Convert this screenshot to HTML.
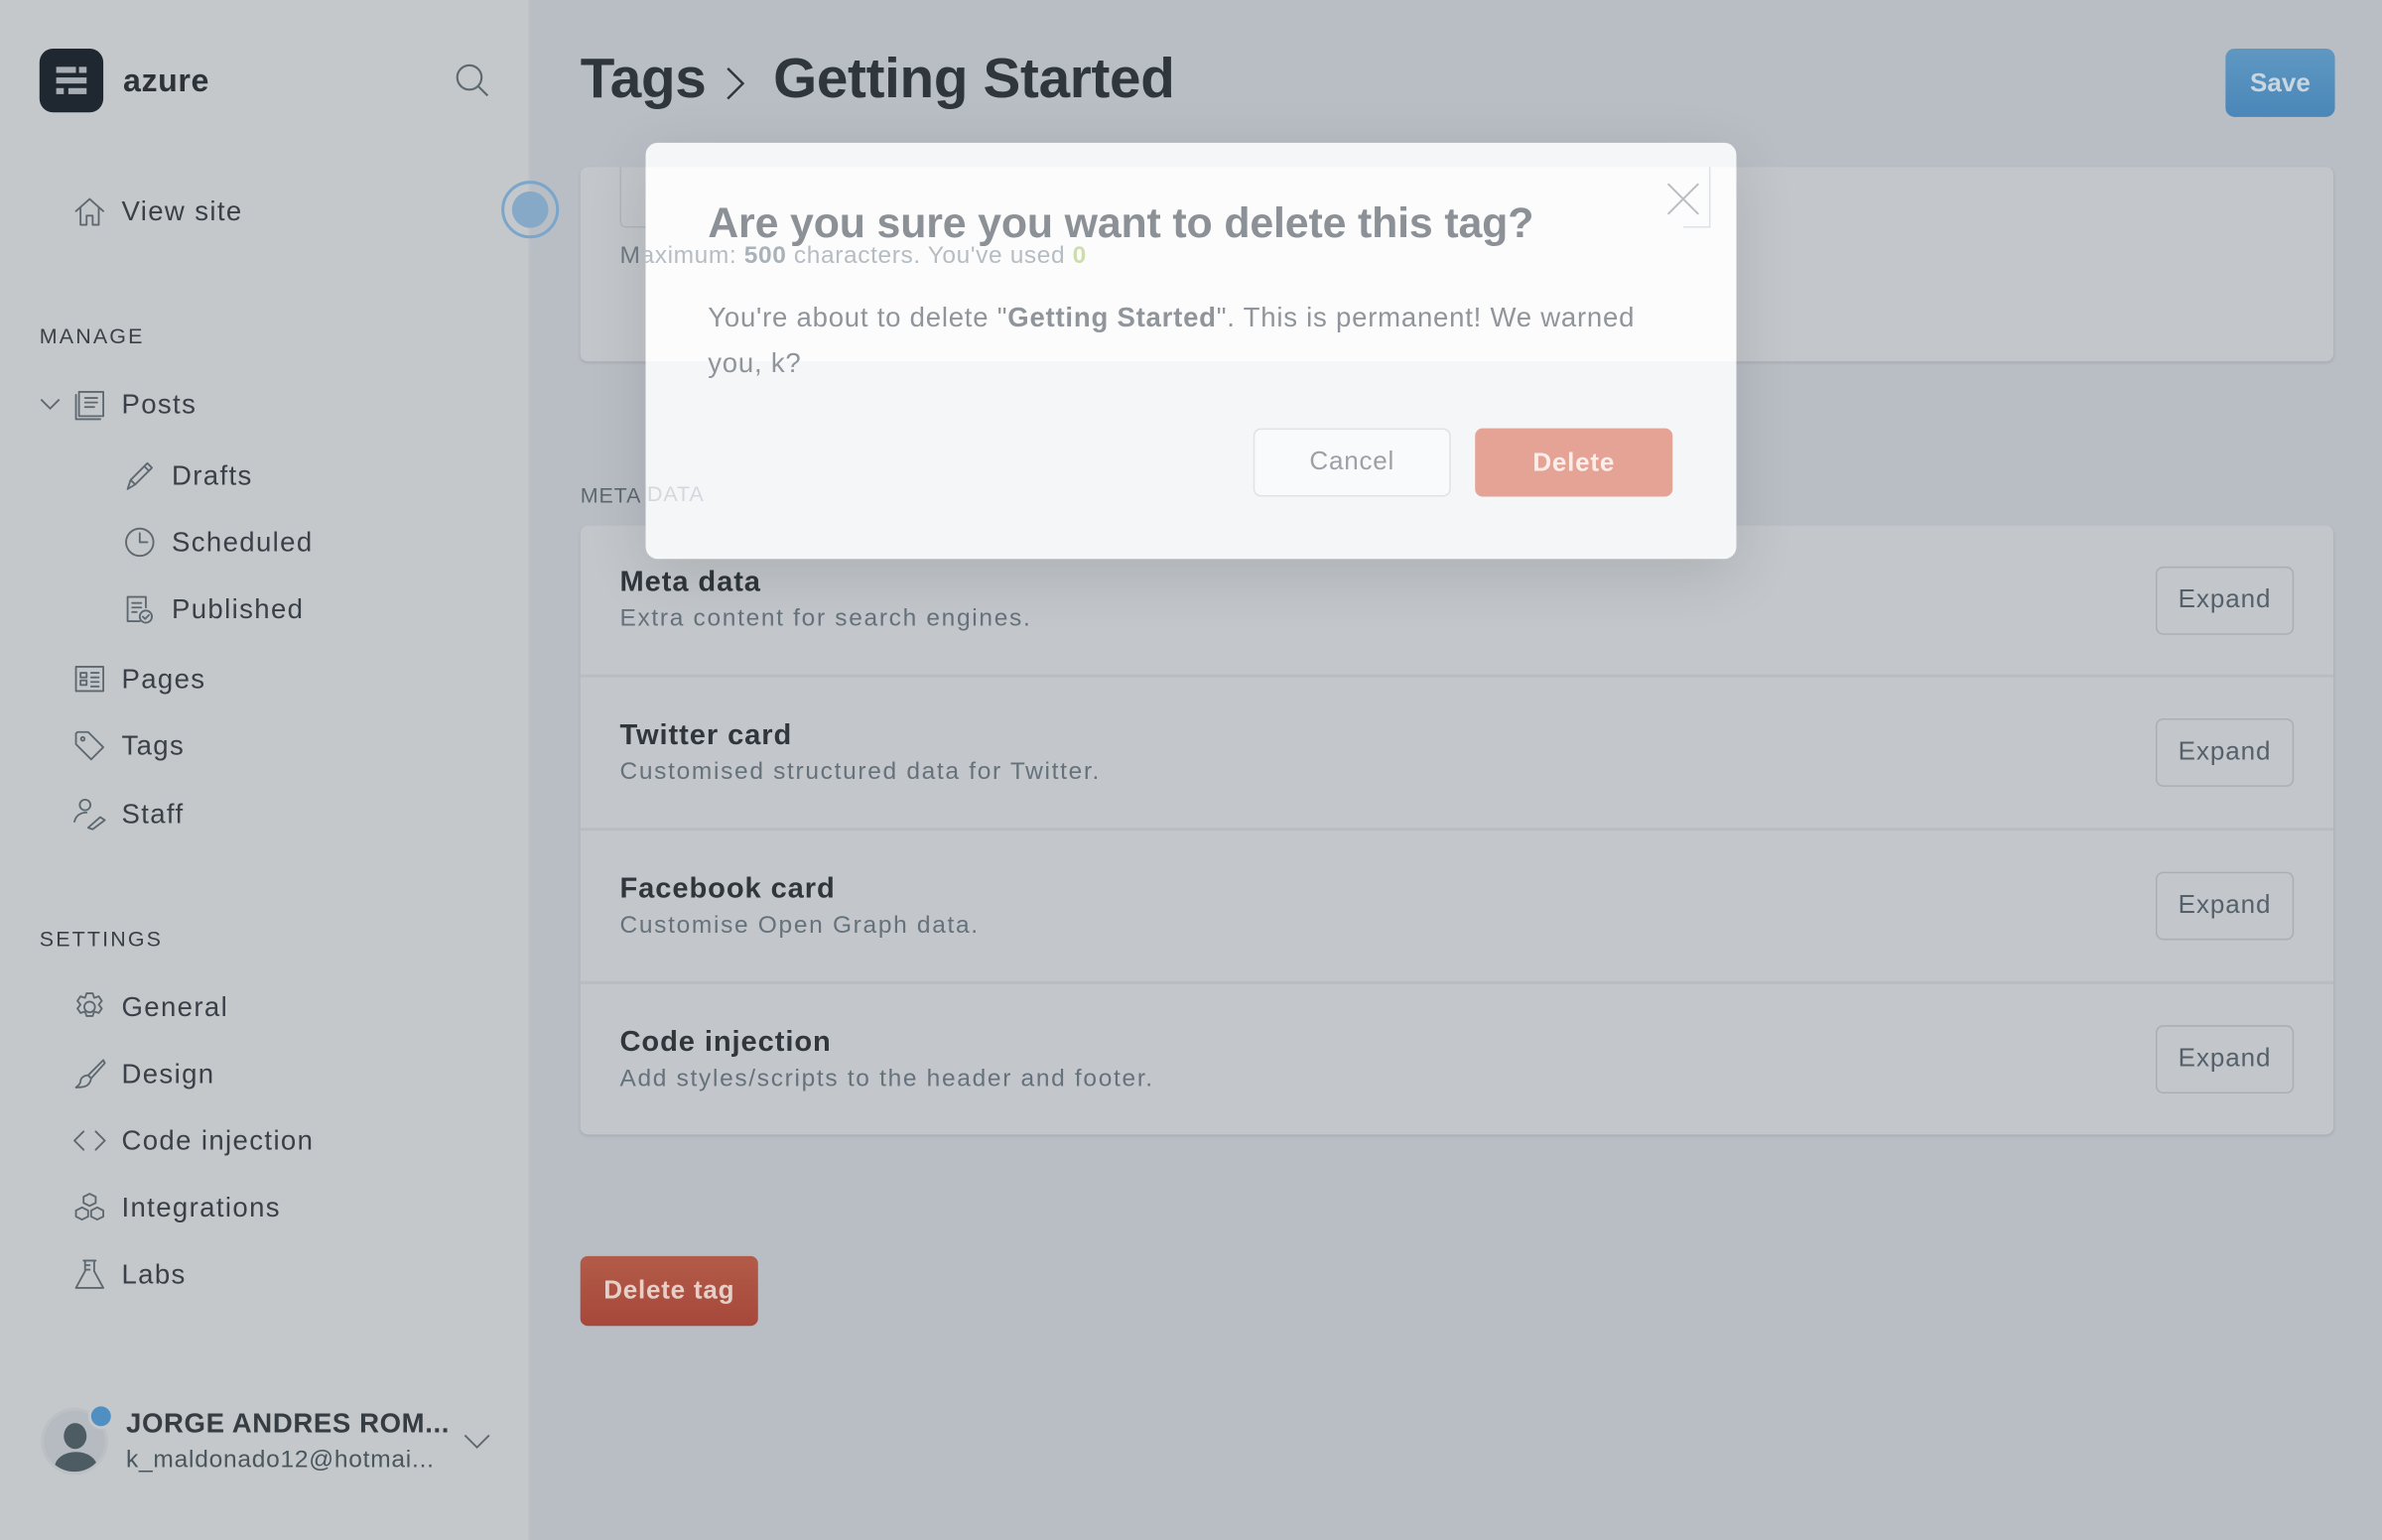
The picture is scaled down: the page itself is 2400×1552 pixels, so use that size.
<!DOCTYPE html>
<html><head><meta charset="utf-8"><style>
*{box-sizing:border-box;margin:0;padding:0}
html,body{width:2400px;height:1552px;overflow:hidden;background:#b9bec5}
#w{position:absolute;left:0;top:0;width:1568px;height:1014px;transform:scale(1.530612);transform-origin:0 0;font-family:"Liberation Sans",sans-serif;color:#394047}
.a{position:absolute;white-space:nowrap}
#sb{position:absolute;left:0;top:0;width:349px;height:1014px;background:#c4c8cb;border-right:1px solid #bcc0c4}
.nav{position:absolute;font-size:18px;letter-spacing:.9px;color:#394047;line-height:22px}
.ic{position:absolute;width:22px;height:22px}
.ic svg{width:22px;height:22px;fill:none;stroke:#5d6870;stroke-width:1.2;stroke-linecap:round;stroke-linejoin:round}
.hd{position:absolute;font-size:14px;letter-spacing:1.4px;color:#394047}
.card{position:absolute;background:#c3c7cb;border-radius:5px;box-shadow:0 1px 2px rgba(0,0,0,.1)}
.row{position:absolute;left:0;width:1154px;border-bottom:2px solid #b8bdc2}
.rt{position:absolute;left:26px;font-size:19px;font-weight:bold;color:#2f363c;letter-spacing:.6px}
.rs{position:absolute;left:26px;font-size:16px;color:#66727b;letter-spacing:1.1px}
.ex{position:absolute;left:1037px;width:91px;height:45px;border:1.5px solid #a9b0b5;border-radius:5px;font-size:17px;color:#55616a;text-align:center;line-height:42px;letter-spacing:.6px}
</style></head><body><div id="w">
<div id="sb">
 <div class="a" style="left:26px;top:32px;width:42px;height:42px;border-radius:9px;background:#1f2830"></div>
 <div class="a" style="left:37px;top:44px;width:13px;height:4px;background:#a7adb3"></div>
 <div class="a" style="left:52px;top:44px;width:5px;height:4px;background:#a7adb3"></div>
 <div class="a" style="left:37px;top:51px;width:20px;height:4px;background:#a7adb3"></div>
 <div class="a" style="left:37px;top:58px;width:5px;height:4px;background:#a7adb3"></div>
 <div class="a" style="left:45px;top:58px;width:12px;height:4px;background:#a7adb3"></div>
 <div class="a" style="left:81px;top:42px;font-size:21px;font-weight:bold;color:#2c343a;letter-spacing:.4px">azure</div>
 <svg class="a" style="left:299px;top:41px" width="24" height="24" fill="none" stroke="#5d6870" stroke-width="1.4"><circle cx="10" cy="10" r="8"/><path d="M16 16l6 6"/></svg>
 <div class="ic" style="left:48px;top:128px"><svg viewBox="0 0 22 22"><path d="M2 11L11 3l9 8M5 9v11h4v-6h4v6h4V9"/></svg></div>
 <div class="nav" style="left:80px;top:128px">View site</div>
 <div class="hd" style="left:26px;top:213px">MANAGE</div>
 <svg class="a" style="left:26px;top:261px" width="14" height="10" fill="none" stroke="#5d6870" stroke-width="1.2"><path d="M1 2l6 6 6-6"/></svg>
 <div class="ic" style="left:48px;top:255px"><svg viewBox="0 0 22 22"><path d="M4 3h16v16H4zM2 5v16h16M8 7h8M8 10h8M8 13h6"/></svg></div>
 <div class="nav" style="left:80px;top:255px">Posts</div>
 <div class="ic" style="left:81px;top:302px"><svg viewBox="0 0 22 22"><path d="M3 20l2-6L16 3l3 3L8 17zM14 5l3 3M5 14l3 3"/></svg></div>
 <div class="nav" style="left:113px;top:302px">Drafts</div>
 <div class="ic" style="left:81px;top:346px"><svg viewBox="0 0 22 22"><circle cx="11" cy="11" r="9"/><path d="M11 5v6h5"/></svg></div>
 <div class="nav" style="left:113px;top:346px">Scheduled</div>
 <div class="ic" style="left:81px;top:390px"><svg viewBox="0 0 22 22"><path d="M11 19H3V3h12v7M6 7h6M6 10h6M6 13h3"/><circle cx="15" cy="16" r="4"/><path d="M13 16l1.5 1.5L17 15"/></svg></div>
 <div class="nav" style="left:113px;top:390px">Published</div>
 <div class="ic" style="left:48px;top:436px"><svg viewBox="0 0 22 22"><path d="M2 3h18v16H2zM5 7h4v3H5zM5 12h4v3H5zM12 7h5M12 10h5M12 13h5M12 16h5"/></svg></div>
 <div class="nav" style="left:80px;top:436px">Pages</div>
 <div class="ic" style="left:48px;top:480px"><svg viewBox="0 0 22 22"><path d="M2 3v7l10 10 8-8L10 2H3z"/><circle cx="6.5" cy="6.5" r="1.2"/></svg></div>
 <div class="nav" style="left:80px;top:480px">Tags</div>
 <div class="ic" style="left:48px;top:525px"><svg viewBox="0 0 22 22"><circle cx="8" cy="5" r="3.5"/><path d="M1 16c1-4 4-6 8-6M10 20l8-7 3 2-8 6z"/></svg></div>
 <div class="nav" style="left:80px;top:525px">Staff</div>
 <div class="hd" style="left:26px;top:610px">SETTINGS</div>
 <div class="ic" style="left:48px;top:652px"><svg viewBox="0 0 22 22"><circle cx="11" cy="11" r="3.5"/><path d="M9 2h4l1 3 3-1 2 3-2 2.5 2 2.5-2 3-3-1-1 3H9l-1-3-3 1-2-3 2-2.5L3 7l2-3 3 1z"/></svg></div>
 <div class="nav" style="left:80px;top:652px">General</div>
 <div class="ic" style="left:48px;top:696px"><svg viewBox="0 0 22 22"><path d="M20 2l-10 10 2 2L21 4zM10 12c-3 0-5 2-5 4s-2 3-3 4c4 0 9 0 10-6"/></svg></div>
 <div class="nav" style="left:80px;top:696px">Design</div>
 <div class="ic" style="left:48px;top:740px"><svg viewBox="0 0 22 22"><path d="M7 5l-6 6 6 6M15 5l6 6-6 6"/></svg></div>
 <div class="nav" style="left:80px;top:740px">Code injection</div>
 <div class="ic" style="left:48px;top:784px"><svg viewBox="0 0 22 22"><path d="M11 2l4 2v4l-4 2-4-2V4zM6 11l4 2v4l-4 2-4-2v-4zM16 11l4 2v4l-4 2-4-2v-4z"/></svg></div>
 <div class="nav" style="left:80px;top:784px">Integrations</div>
 <div class="ic" style="left:48px;top:828px"><svg viewBox="0 0 22 22"><path d="M7 2h8M8 2v7L2 20h18L14 9V2M8 5h3M8 8h3"/></svg></div>
 <div class="nav" style="left:80px;top:828px">Labs</div>
 <div class="a" style="left:27px;top:927px;width:44px;height:44px;border-radius:50%;background:#b5bbc1;border:2px solid #bcc1c6;overflow:hidden">
  <div class="a" style="left:13px;top:8px;width:15px;height:17px;border-radius:50%;background:#4d5b62"></div>
  <div class="a" style="left:7px;top:27px;width:28px;height:20px;border-radius:50% 50% 0 0;background:#4d5b62"></div>
 </div>
 <div class="a" style="left:58px;top:924px;width:17px;height:17px;border-radius:50%;background:#4f8fc2;border:2.5px solid #c4c8cb"></div>
 <div class="a" style="left:83px;top:927px;font-size:18px;font-weight:bold;color:#353c42;letter-spacing:.4px">JORGE ANDRES ROM...</div>
 <div class="a" style="left:83px;top:953px;font-size:16px;color:#4a565e;letter-spacing:.5px">k_maldonado12@hotmai...</div>
 <svg class="a" style="left:305px;top:944px" width="18" height="11" fill="none" stroke="#5d6870" stroke-width="1.2"><path d="M1 1l8 8 8-8"/></svg>
</div>
<div class="a" style="left:330px;top:119px;width:38px;height:38px;border-radius:50%;border:2.5px solid #7ba6cc"></div>
<div class="a" style="left:337px;top:126px;width:24px;height:24px;border-radius:50%;background:#86a9c8"></div>

<div class="a" style="left:382px;top:31px;font-size:37px;color:#2f363c;font-weight:bold;letter-spacing:-.2px">Tags</div>
<svg class="a" style="left:476px;top:43px" width="16" height="24" fill="none" stroke="#2f363c" stroke-width="1.6"><path d="M3 2l10 10-10 10"/></svg>
<div class="a" style="left:509px;top:31px;font-size:37px;color:#2f363c;font-weight:bold;letter-spacing:-.2px">Getting Started</div>
<div class="a" style="left:1465px;top:32px;width:72px;height:45px;border-radius:6px;background:linear-gradient(#5f98c2,#4a86b8);color:#c9d6e0;font-size:17px;font-weight:bold;text-align:center;line-height:45px">Save</div>

<div class="card" style="left:382px;top:110px;width:1154px;height:128px"></div>
<div class="a" style="left:408px;top:110px;width:717px;height:40px;border:1px solid #b0b6bb;border-top:0;border-radius:0 0 4px 4px"></div>
<div class="a" style="left:382px;top:318px;font-size:14px;color:#5d6870;letter-spacing:.6px">META</div>

<div class="card" style="left:382px;top:346px;width:1154px;height:401px">
 <div class="row" style="top:0;height:100px"><div class="rt" style="top:27px">Meta data</div><div class="rs" style="top:53px">Extra content for search engines.</div><div class="ex" style="top:27px">Expand</div></div>
 <div class="row" style="top:100px;height:101px"><div class="rt" style="top:28px">Twitter card</div><div class="rs" style="top:54px">Customised structured data for Twitter.</div><div class="ex" style="top:27px">Expand</div></div>
 <div class="row" style="top:201px;height:101px"><div class="rt" style="top:28px">Facebook card</div><div class="rs" style="top:54px">Customise Open Graph data.</div><div class="ex" style="top:27px">Expand</div></div>
 <div class="row" style="top:302px;height:99px;border:0"><div class="rt" style="top:28px">Code injection</div><div class="rs" style="top:54px">Add styles/scripts to the header and footer.</div><div class="ex" style="top:27px">Expand</div></div>
</div>
<div class="a" style="left:382px;top:827px;width:117px;height:46px;border-radius:5px;background:linear-gradient(#b35b49,#a6483a);color:#e6cfc8;font-size:17px;font-weight:bold;text-align:center;line-height:46px;letter-spacing:.5px">Delete tag</div>

<div class="a" style="left:425px;top:94px;width:718px;height:274px;border-radius:8px;background:rgba(249,250,251,.93);box-shadow:0 10px 40px rgba(0,0,0,.12)">
 <div class="a" style="left:0;top:16px;width:718px;height:128px;background:rgba(255,255,255,.7)"></div>
 <div class="a" style="left:683px;top:16px;width:18px;height:40px;border-right:1px solid #dde3e8;border-bottom:1px solid #dde3e8"></div>
 <div class="a" style="left:-17px;top:66px;font-size:16px;color:#b5bdc3;letter-spacing:.4px"><span style="color:#6a757d">M</span>aximum: <b style="color:#a9b2b9">500</b> characters. You've used <b style="color:#cfdcae">0</b></div>
 <div class="a" style="left:1px;top:223px;font-size:14px;color:#d2d8dd;letter-spacing:.6px">DATA</div>
 <div class="a" style="left:41px;top:37px;font-size:28px;font-weight:bold;color:#8b9196;letter-spacing:-.1px">Are you sure you want to delete this tag?</div>
 <svg class="a" style="left:672px;top:26px" width="22" height="22" fill="none" stroke="#b9bec2" stroke-width="1.3"><path d="M1 1l20 20M21 1L1 21"/></svg>
 <div class="a" style="left:41px;top:100px;font-size:18px;line-height:30px;color:#8f959a;white-space:normal;width:640px;letter-spacing:.5px">You're about to delete "<b>Getting Started</b>". This is permanent! We warned you, k?</div>
 <div class="a" style="left:400px;top:188px;width:130px;height:45px;border:1.5px solid #dfe3e6;border-radius:5px;background:#f9fafb;font-size:17px;color:#9ba1a6;text-align:center;line-height:42px;letter-spacing:.5px">Cancel</div>
 <div class="a" style="left:546px;top:188px;width:130px;height:45px;border-radius:5px;background:#e5a396;font-size:17px;font-weight:bold;color:#fbeeea;text-align:center;line-height:45px;letter-spacing:.5px">Delete</div>
</div>
</div></body></html>
